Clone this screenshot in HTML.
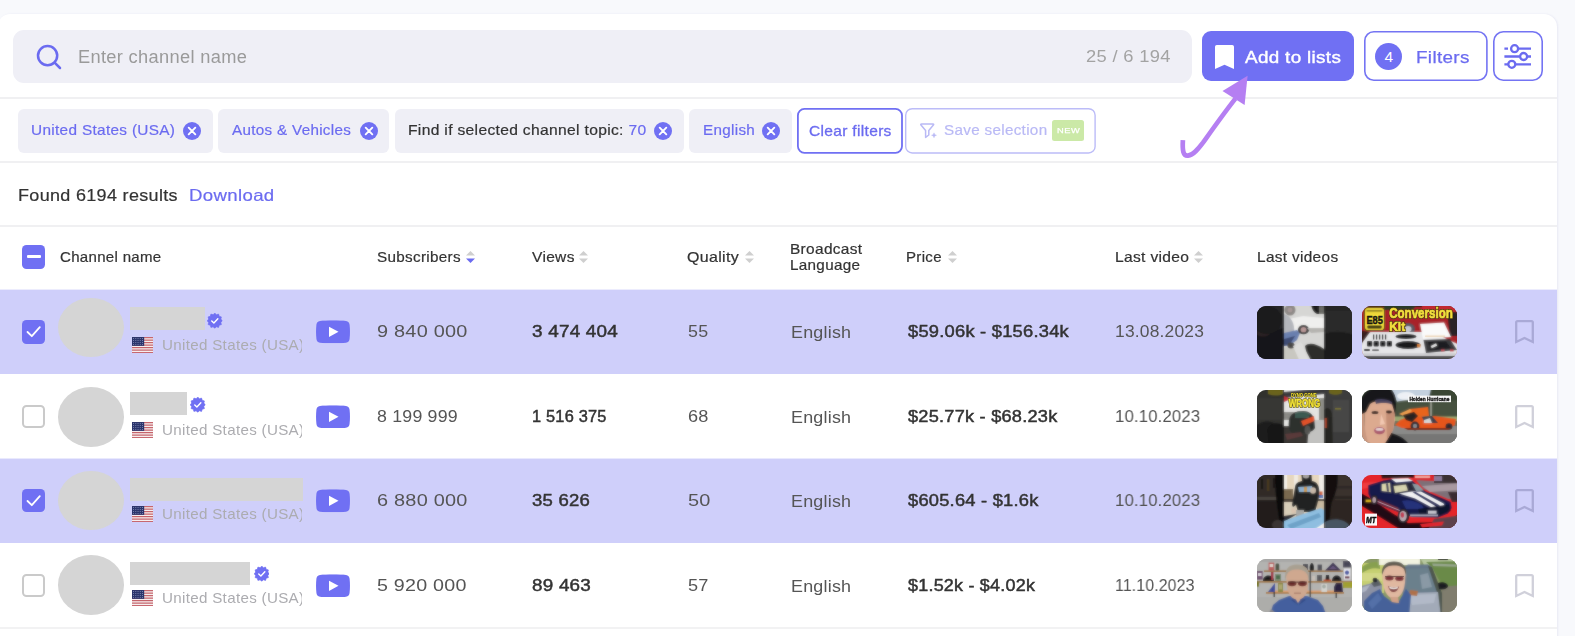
<!DOCTYPE html>
<html><head><meta charset="utf-8">
<style>
*{box-sizing:border-box;margin:0;padding:0}
html,body{width:1575px;height:636px;overflow:hidden;background:#f8f9fc;font-family:"Liberation Sans",sans-serif;color:#333}
.abs{position:absolute}
#card{position:absolute;left:-2px;top:14px;width:1559px;height:640px;background:#fff;border-radius:12px 13px 0 0;box-shadow:1px 0 2px rgba(120,120,190,.12)}
.hl{position:absolute;left:0;width:1557px;height:2px;background:#f0f0f2}
#search{position:absolute;left:13px;top:30px;width:1179px;height:53px;background:#efeff6;border-radius:11px}
.t{position:absolute;white-space:pre;line-height:20px;transform-origin:0 50%;will-change:transform}
.chip{position:absolute;top:109px;height:43.5px;background:#efeff6;border-radius:6px}
.x{position:absolute;top:122px;width:18px;height:18px}
.btn{position:absolute;border-radius:9px}
.row{position:absolute;left:0;width:1557px;height:84.5px}
.row.sel{background:#cfcffa}
.cb{position:absolute;left:21.8px;width:23.6px;height:23.6px;border-radius:4.5px}
.cb.on{background:#7070f3}
.cb.off{background:#fff;border:2.2px solid #cacaca}
.av{position:absolute;left:58px;width:66.2px;height:59.7px;border-radius:50%;background:#d5d5d5}
.nm{position:absolute;left:130px;height:23px;background:#d5d5d5}
.yt{position:absolute;left:315.8px;width:34px;height:23.6px}
.th{position:absolute;width:95px;height:53px;border-radius:9px;overflow:hidden}
.th svg{display:block}
.bm{position:absolute;left:1515px;width:19px;height:24px}
.vf{position:absolute;width:15.5px;height:15.5px}
.fl{position:absolute;left:132.2px;width:21.3px;height:16.3px}
.cty{position:absolute;left:161.8px;width:139.5px;will-change:transform;height:20px;overflow:hidden;white-space:nowrap;color:#acacb0;font-size:14.5px;line-height:20px;letter-spacing:.3px}
.cty span{display:inline-block;transform-origin:0 50%;transform:scaleX(1.045)}
.so{position:absolute;top:251px;width:9px;height:12px}
</style></head><body>
<svg width="0" height="0" style="position:absolute">
<defs>
<symbol id="x" viewBox="0 0 18 18"><circle cx="9" cy="9" r="9" fill="#7070f3"/><path d="M5.7 5.7L12.3 12.3M12.3 5.7L5.7 12.3" stroke="#fff" stroke-width="1.9" stroke-linecap="round"/></symbol>
<symbol id="so" viewBox="0 0 9 12"><path d="M4.5 0L9 4.6H0Z" fill="#cfcfcf"/><path d="M4.5 12L9 7.4H0Z" fill="#cfcfcf"/></symbol>
<symbol id="soa" viewBox="0 0 9 12"><path d="M4.5 0L9 4.6H0Z" fill="#cfcfcf"/><path d="M4.5 12L9 7.4H0Z" fill="#6b6bf0"/></symbol>
<symbol id="yt" viewBox="0 0 34 23"><path d="M4 0.6C10 -0.2 24 -0.2 30 0.6C32.3 1 33.4 2.2 33.6 4.5C34.1 9 34.1 14 33.6 18.5C33.4 20.8 32.3 22 30 22.4C24 23.2 10 23.2 4 22.4C1.7 22 0.6 20.8 0.4 18.5C-0.1 14 -0.1 9 0.4 4.5C0.6 2.2 1.7 1 4 0.6Z" fill="#7070f3"/><path d="M13 6.4L22.5 11.5L13 16.6Z" fill="#fff"/></symbol>
<symbol id="bm" viewBox="0 0 19 24"><path d="M2.6 1.2H16.4Q17.8 1.2 17.8 2.6V22L9.5 18L1.2 22V2.6Q1.2 1.2 2.6 1.2Z" fill="none" stroke="rgba(20,20,70,.2)" stroke-width="2.3" stroke-linejoin="miter"/></symbol>
<symbol id="vf" viewBox="0 0 16 16"><path id="vfp" d="M8.00 0.10L9.68 1.72L11.95 1.16L12.60 3.40L14.84 4.05L14.28 6.32L15.90 8.00L14.28 9.68L14.84 11.95L12.60 12.60L11.95 14.84L9.68 14.28L8.00 15.90L6.32 14.28L4.05 14.84L3.40 12.60L1.16 11.95L1.72 9.68L0.10 8.00L1.72 6.32L1.16 4.05L3.40 3.40L4.05 1.16L6.32 1.72Z" fill="#7070f3" stroke="#7070f3" stroke-width=".7" stroke-linejoin="round"/><path d="M4.9 8.2L7.1 10.3L11.2 5.9" fill="none" stroke="#fff" stroke-width="1.45" stroke-linecap="round" stroke-linejoin="round"/></symbol>
<symbol id="fl" viewBox="0 0 21 16"><rect width="21" height="16" fill="#f6eeee"/><g fill="#c5626a"><rect y="0" width="21" height="1.2"/><rect y="2.46" width="21" height="1.2"/><rect y="4.92" width="21" height="1.2"/><rect y="7.38" width="21" height="1.2"/><rect y="9.84" width="21" height="1.2"/><rect y="12.3" width="21" height="1.2"/><rect y="14.8" width="21" height="1.2"/></g><rect width="12" height="8.7" fill="#2b356c"/><g fill="#8890b8"><rect x="1.1" y="1.0" width=".9" height=".9"/><rect x="3.3" y="1.0" width=".9" height=".9"/><rect x="5.5" y="1.0" width=".9" height=".9"/><rect x="7.7" y="1.0" width=".9" height=".9"/><rect x="9.9" y="1.0" width=".9" height=".9"/><rect x="1.1" y="3.0" width=".9" height=".9"/><rect x="3.3" y="3.0" width=".9" height=".9"/><rect x="5.5" y="3.0" width=".9" height=".9"/><rect x="7.7" y="3.0" width=".9" height=".9"/><rect x="9.9" y="3.0" width=".9" height=".9"/><rect x="1.1" y="5.0" width=".9" height=".9"/><rect x="3.3" y="5.0" width=".9" height=".9"/><rect x="5.5" y="5.0" width=".9" height=".9"/><rect x="7.7" y="5.0" width=".9" height=".9"/><rect x="9.9" y="5.0" width=".9" height=".9"/><rect x="1.1" y="7.0" width=".9" height=".9"/><rect x="3.3" y="7.0" width=".9" height=".9"/><rect x="5.5" y="7.0" width=".9" height=".9"/><rect x="7.7" y="7.0" width=".9" height=".9"/><rect x="9.9" y="7.0" width=".9" height=".9"/></g></symbol>
<filter id="bl" x="-10%" y="-10%" width="120%" height="120%"><feGaussianBlur stdDeviation="0.85"/></filter>
<filter id="bl2" x="-10%" y="-10%" width="120%" height="120%"><feGaussianBlur stdDeviation="1.3"/></filter>
<filter id="bl3" x="-10%" y="-10%" width="120%" height="120%"><feGaussianBlur stdDeviation="0.35"/></filter>

<symbol id="th0a" viewBox="0 0 95 53"><g id="c0a">
<rect x="-5" y="-5" width="105" height="63" fill="#262628"/>
<path d="M-5 30L27 22V58H-5Z" fill="#14161a"/>
<ellipse cx="6" cy="27" rx="7" ry="3.5" fill="#2c2223"/>
<ellipse cx="10" cy="14" rx="15" ry="14" fill="#1c1c1e"/>
<rect x="27" y="-5" width="40" height="63" fill="#d6d6d4"/>
<path d="M27 14L46 10L67 12V22L48 22L38 30L27 26Z" fill="#efefee"/>
<path d="M27 8C34 10 38 18 37 26L27 30Z" fill="#b4b6bc"/>
<ellipse cx="33" cy="4" rx="5.5" ry="5.5" fill="#8c8886"/>
<ellipse cx="33" cy="4" rx="2.5" ry="2.5" fill="#a79a98"/>
<path d="M54 -5H67V8H60C56 6 54 2 54 -5Z" fill="#1e1e1e"/>
<rect x="62" y="0" width="5" height="8" fill="#6b6b66"/>
<path d="M27 27L40 24L43 27L40 34L32 40L27 40Z" fill="#6a7fae"/>
<path d="M27 33L38 30L33 38L27 40Z" fill="#3f4d74"/>
<ellipse cx="46.5" cy="23.7" rx="5.6" ry="4.6" fill="#3c3a3a"/>
<ellipse cx="46.5" cy="23.7" rx="3" ry="2.6" fill="#b89a98"/>
<path d="M50 22H67V26L54 27Z" fill="#b5b3b0"/>
<path d="M48 40C52 36 60 38 67 43V58H52Z" fill="#2e2e2c"/>
<path d="M27 42L36 40L44 58H27Z" fill="#c9c7c0"/>
<ellipse cx="34" cy="39.5" rx="3.6" ry="3" fill="#4a4846"/>
<path d="M36 40L44 36L56 58H44Z" fill="#dededc"/>
<rect x="67" y="-5" width="33" height="63" fill="#2c2c2b"/>
<path d="M67 28C78 24 90 26 100 30V58H67Z" fill="#1d1d1c"/>
<rect x="67" y="-5" width="33" height="10" fill="#262626"/>
</g><use href="#c0a" filter="url(#bl)" opacity=".6"/></symbol>

<symbol id="th0b" viewBox="0 0 95 53"><g id="c0b">
<rect x="-5" y="-5" width="105" height="63" fill="#a8232a"/>
<rect x="-5" y="-5" width="105" height="6" fill="#3a1a18"/>
<path d="M22 -5H60L50 4H22Z" fill="#2c3a2a"/>
<path d="M60 -2L92 -2L95 14L60 10Z" fill="#c12a30"/>
<path d="M85 6H100V30H88Z" fill="#2a2426"/>
<ellipse cx="46" cy="23" rx="7" ry="6" fill="#5a5660"/>
<ellipse cx="46" cy="23" rx="3.5" ry="3" fill="#c8c8d0"/>
<path d="M-5 27L10 26H70L100 40V58H-5Z" fill="#e6e6e8"/>
<path d="M-5 24L8 26L-5 44Z" fill="#3a2020"/>
<path d="M-5 49H100V58H-5Z" fill="#4a4a4c"/>
<path d="M-2 47H95V50H-2Z" fill="#cfcfd2"/>
<g fill="#1c1c1e">
<rect x="5" y="35" width="5.2" height="5.6" rx="1"/><rect x="11.6" y="35" width="5.2" height="5.6" rx="1"/><rect x="18.2" y="35" width="5.2" height="5.6" rx="1"/><rect x="24.8" y="35" width="5.2" height="5.6" rx="1"/>
<rect x="2" y="43" width="6" height="2" rx="1"/><rect x="10" y="43.4" width="7" height="1.4" rx=".7"/>
<rect x="11" y="28.5" width="1.2" height="5"/><rect x="14" y="28.5" width="1.2" height="5"/><rect x="17" y="28.5" width="1.2" height="5"/><rect x="20" y="28.5" width="1.2" height="5"/><rect x="23" y="28.5" width="1.2" height="5"/>
<ellipse cx="44" cy="30.5" rx="10.5" ry="2.6"/><ellipse cx="46" cy="39" rx="12.5" ry="4"/>
</g>
<rect x="55" y="38" width="3.4" height="3.4" fill="#d07a30"/>
<path d="M58 18L82 16.5L89 31L61 33Z" fill="#fbfbfb"/>
<rect x="63" y="29.6" width="20" height="1.2" fill="#e8c9a0"/>
<path d="M61.5 34L88 33L95 44L64 47Z" fill="#3a3a3e"/>
<path d="M66 36L84 35.5L89 42L68 44Z" fill="#1e1e22"/>
<rect x="69" y="38.5" width="6" height="2.6" fill="#e6e6e6" transform="rotate(-25 72 40)"/>
<rect x="79" y="43.4" width="3.6" height="2" fill="#c0404c"/><rect x="88" y="43.4" width="3.6" height="2" fill="#c0404c"/>
<rect x="2.2" y="1.2" width="20.6" height="23.6" rx="3.4" fill="#3a3210"/>
<rect x="3" y="2" width="19" height="22" rx="2.8" fill="#f0d93a"/>
<rect x="5.4" y="19.4" width="14.2" height="3.2" rx=".8" fill="#2a2610"/>
<rect x="4.6" y="4.2" width="15.8" height="1.3" fill="#6a5e18"/>
</g><use href="#c0b" filter="url(#bl)" opacity=".6"/>
<text x="4.4" y="17.6" font-family="Liberation Sans" font-weight="bold" font-size="11.6" fill="#1a1a12" textLength="16.4" lengthAdjust="spacingAndGlyphs" stroke="#1a1a12" stroke-width=".5">E85</text>
<g font-family="Liberation Sans" font-weight="bold" filter="url(#bl3)">
<text x="27.2" y="12.4" font-size="14.8" textLength="63.6" lengthAdjust="spacingAndGlyphs" fill="#4a3a10" stroke="#4a3a10" stroke-width="2">Conversion</text>
<text x="27.2" y="24.7" font-size="13.4" textLength="16" lengthAdjust="spacingAndGlyphs" fill="#4a3a10" stroke="#4a3a10" stroke-width="2">Kit</text>
<text x="27.2" y="12.4" font-size="14.8" textLength="63.6" lengthAdjust="spacingAndGlyphs" fill="#f3de3e" stroke="#f3de3e" stroke-width=".7">Conversion</text>
<text x="27.2" y="24.7" font-size="13.4" textLength="16" lengthAdjust="spacingAndGlyphs" fill="#f3de3e" stroke="#f3de3e" stroke-width=".7">Kit</text>
</g>
</symbol>

<symbol id="th1a" viewBox="0 0 95 53"><g id="c1a">
<rect x="-5" y="-5" width="105" height="63" fill="#30302e"/>
<rect x="-5" y="8" width="32" height="22" fill="#383836"/>
<path d="M-5 40C2 30 14 30 18 34L27 36V58H-5Z" fill="#1e1e1e"/>
<path d="M10 40C12 32 22 32 27 36V58H12Z" fill="#181818"/>
<path d="M11 -3H26V4C22 6 15 6 11 4Z" fill="#6b641e"/>
<rect x="27" y="-5" width="40" height="63" fill="#e4e4e2"/>
<path d="M27 2L67 -2V4L27 8Z" fill="#3a3a3e"/>
<path d="M27 6L34 9L27 12Z" fill="#c03038"/>
<rect x="27" y="22" width="14" height="8" fill="#8a8a86"/>
<rect x="62" y="8" width="5" height="24" fill="#8c8c86"/>
<path d="M52 30H67V58H48Z" fill="#c2c2c0"/>
<path d="M27 36L52 36L50 58H27Z" fill="#3a3836"/>
<path d="M32 30C33 24 38 21 46 21C52 21 55 24 57 28L58 38C56 42 50 43 46 43H36C32 42 31 36 32 30Z" fill="#2d302e"/>
<path d="M38 23C42 21 50 21 53 24L52 28H38Z" fill="#3e5a52"/>
<path d="M44 31L57 26L57.5 31L46 36Z" fill="#e0522a"/>
<ellipse cx="50.5" cy="40" rx="3" ry="4.6" fill="#555553"/>
<path d="M28 44L44 42L46 46L30 50Z" fill="#5a3a3a"/>
<rect x="67" y="-5" width="33" height="63" fill="#3e3e3c"/>
<rect x="76" y="10" width="16" height="32" fill="#484846"/>
<path d="M72 -3H85V3C82 5.4 75 5.4 72 3Z" fill="#6b641e"/>
<path d="M67 20C70 16 74 18 75 24L76 58H67Z" fill="#262624"/>
<rect x="67.5" y="28" width="2.4" height="10" fill="#a04028"/>
<rect x="78" y="18" width="6" height="1.6" fill="#7a7436"/>
</g><use href="#c1a" filter="url(#bl)" opacity=".6"/>
<g font-family="Liberation Sans" font-weight="bold" filter="url(#bl3)">
<text x="31.8" y="17.2" font-size="10" textLength="31.4" lengthAdjust="spacingAndGlyphs" fill="#4a4410" stroke="#4a4410" stroke-width="1.6">WRONG</text>
<text x="31.8" y="17.2" font-size="10" textLength="31.4" lengthAdjust="spacingAndGlyphs" fill="#f2e23a" stroke="#f2e23a" stroke-width=".5">WRONG</text>
<text x="34" y="6.6" font-size="4.8" textLength="25.6" lengthAdjust="spacingAndGlyphs" fill="#f2e23a" stroke="#4a4410" stroke-width=".8" paint-order="stroke">DYNO GONE</text>
</g>
</symbol>

<symbol id="th1b" viewBox="0 0 95 53"><g id="c1b">
<rect x="-5" y="-5" width="105" height="63" fill="#414c3a"/>
<path d="M28 -5H72L68 6L60 14H36Z" fill="#c3d0de"/>
<ellipse cx="44" cy="6" rx="9" ry="4" fill="#eef1f5"/>
<path d="M70 -5H100V12H66Z" fill="#3a4636"/>
<path d="M34 12C44 8 60 12 100 10V30H34Z" fill="#475240"/>
<rect x="30" y="26.5" width="70" height="5" fill="#99a772"/>
<rect x="30" y="31" width="70" height="6" fill="#6d705e"/>
<rect x="-5" y="36" width="105" height="22" fill="#8b8b89"/>
<rect x="30" y="44" width="70" height="14" fill="#777775"/>
<rect x="68.4" y="12" width="1.2" height="14" fill="#bdbdb5"/>
<path d="M33 35L38 30L46 27L66 27L72 26L94 29L93 35L88 38H40Z" fill="#e5561c"/>
<path d="M40 24L48 19L66 17L67 26L58 27L46 27Z" fill="#e8651f"/>
<path d="M37 24L48 19L50 21L42 26Z" fill="#f0a050"/>
<path d="M41 25L52 22L56 26L50 32L44 30Z" fill="#2a2420"/>
<path d="M60 27L70 26L76 33L63 33Z" fill="#3a3e48"/>
<path d="M62 30L68 28L70 33H62Z" fill="#d8d8d8"/>
<ellipse cx="53" cy="36" rx="4.4" ry="4.4" fill="#2c2c30"/><ellipse cx="53" cy="36" rx="2.2" ry="2.2" fill="#8a8a90"/>
<ellipse cx="87" cy="36.5" rx="3.4" ry="3.2" fill="#2c2c30"/>
<path d="M42 38H90L86 40H46Z" fill="#7a2810"/>
<path d="M22 42C30 42 40 46 46 53V58H22Z" fill="#17171a"/>
<path d="M3 12C6 8 26 8 32 14L33 30L31 40L24 52L20 58H6L2 44Z" fill="#dcaa90"/>
<path d="M3 20C2 30 2 40 6 52L3 58H-5V20Z" fill="#c99880"/>
<path d="M24 20L33 22L31 40L25 50Z" fill="#c48e76"/>
<path d="M-2 14C0 2 10 -3 20 -3C30 -3 35 4 34 16L33 24L30 14C24 10 12 10 8 14L4 22L0 24Z" fill="#19191b"/>
<path d="M13 10C18 8 26 9 30 12L30 14.4C26 12.6 18 12.4 14 14Z" fill="#4a4460"/>
<ellipse cx="13" cy="22.5" rx="3.4" ry="1.5" fill="#3a2a24"/><ellipse cx="27" cy="22" rx="3" ry="1.4" fill="#3a2a24"/>
<path d="M19 24L23 34L18 35Z" fill="#f2c8b2"/>
<ellipse cx="17.5" cy="40.6" rx="5.4" ry="3.6" fill="#a8566a"/>
<ellipse cx="17.5" cy="39.4" rx="4" ry="1.4" fill="#e8d8d8"/>
</g><use href="#c1b" filter="url(#bl)" opacity=".6"/>
<rect x="46" y="5.6" width="43" height="6.6" fill="#f6f6f6" filter="url(#bl3)"/>
<text x="47.4" y="10.8" font-family="Liberation Sans" font-weight="bold" font-size="5.4" fill="#151515" stroke="#151515" stroke-width=".35" textLength="40" lengthAdjust="spacingAndGlyphs" filter="url(#bl3)">Holden Hurricane</text>
</symbol>

<symbol id="th2a" viewBox="0 0 95 53"><g id="c2a">
<rect x="-5" y="-5" width="105" height="63" fill="#241f1c"/>
<rect x="-5" y="-5" width="26" height="28" fill="#302b28"/>
<rect x="0" y="22" width="20" height="3" fill="#4a4540"/>
<rect x="4" y="4" width="2" height="10" fill="#1a1816"/><rect x="10" y="4" width="2.4" height="12" fill="#4a3a20"/><rect x="16" y="3" width="2" height="10" fill="#1a1816"/>
<path d="M18 -5H27V58H24L22 44C20 30 18 20 18 -5Z" fill="#0d0b0b"/>
<ellipse cx="21" cy="50" rx="6" ry="5" fill="#3a3634"/>
<rect x="27" y="-5" width="40" height="63" fill="#e6d7be"/>
<rect x="27" y="-5" width="3" height="40" fill="#f3efe8"/>
<rect x="37" y="-5" width="4" height="30" fill="#f1ece2"/>
<rect x="62" y="-5" width="5" height="36" fill="#f0ebe6"/>
<rect x="27" y="14" width="9" height="12" fill="#7a6a50"/>
<rect x="27" y="24" width="40" height="3" fill="#4a4038"/>
<rect x="27" y="27" width="12" height="16" fill="#d8cdb8"/>
<rect x="60" y="26" width="7" height="12" fill="#c9b9a0"/>
<rect x="62.5" y="16.5" width="3" height="4" fill="#d0603a"/><rect x="62" y="20" width="4" height="3" fill="#5070b0"/>
<path d="M44 -5H54L55 6C62 7 63 14 62 22L60 30L58 37H41L39 30L36 32L35 30L38 12C39 7 42 7 45 6Z" fill="#222324"/>
<ellipse cx="49" cy="0" rx="3.4" ry="3.6" fill="#a8a4a0"/>
<path d="M41 12L55 11L56 17L42 17Z" fill="#8fb0cc"/>
<rect x="47" y="12" width="3" height="5" fill="#c89a50"/>
<ellipse cx="56" cy="15.5" rx="3" ry="3.2" fill="#c9b8a8"/>
<ellipse cx="36.4" cy="35.5" rx="2.4" ry="2.6" fill="#d9c4b0"/>
<rect x="39" y="35" width="8" height="8" fill="#a9a9a6"/>
<path d="M27 41L40 39L27 47Z" fill="#2a2a30"/>
<path d="M27 46L46 39L64 33L67 35V58H27Z" fill="#8fbfe0"/>
<path d="M30 50L62 38L64 42L34 54Z" fill="#6fa2c8"/>
<path d="M52 58L67 48V58Z" fill="#f0f0f0"/>
<rect x="67" y="-5" width="33" height="63" fill="#2e2623"/>
<rect x="78" y="-5" width="22" height="30" fill="#3a322f"/>
<rect x="76" y="21" width="24" height="3" fill="#2c2624"/>
<rect x="80" y="11" width="16" height="2.4" fill="#2e2826"/>
<path d="M67 -5H80C82 6 80 16 76 24C73 30 74 40 72 47H67Z" fill="#121010"/>
<path d="M68 47C76 42 88 44 92 50L94 58H68Z" fill="#4a5663"/>
</g><use href="#c2a" filter="url(#bl)" opacity=".6"/></symbol>

<symbol id="th2b" viewBox="0 0 95 53"><g id="c2b">
<rect x="-5" y="-5" width="105" height="63" fill="#e4262c"/>
<path d="M18 -5H52V2.6L20 3.6Z" fill="#2a1a1e"/>
<path d="M50 -5H72V6L54 5Z" fill="#d8222a"/>
<rect x="53" y="0.4" width="15" height="2.6" fill="#f0a8a0"/>
<path d="M54 5L72 6V-5H100V26L86 24L62 14Z" fill="#7e7078"/>
<path d="M72 -5H100V8H72Z" fill="#3a3034"/>
<rect x="72" y="1" width="8" height="5" fill="#8a7a9a"/>
<path d="M60 11L100 8V15L68 17Z" fill="#a89aa0"/>
<path d="M86 17H100V27H90Z" fill="#3a2c30"/>
<path d="M0 8L24 6L10 12L0 14Z" fill="#f03c40"/>
<path d="M-5 16L6 22L30 38L46 48L84 47L95 40V58H44L-5 28Z" fill="#200c14"/>
<path d="M72 44L100 40V58H64Z" fill="#5c434b"/>
<path d="M58 49L82 46.6L80 50.6L60 52.4Z" fill="#e02830"/>
<rect x="3.6" y="24.6" width="6" height="2.6" fill="#d8b020"/>
<path d="M6.3 10.2L21.7 5.6L34 3.4L49.3 5.1L58.5 12.8L63.6 16.4L82 24L88.6 27L89.6 33L86 38.6L76 42.4L50 42L37 37.3L10.4 27L6.4 19Z" fill="#171b4c"/>
<path d="M11 22L36 32.4L37.6 37.4L11 27Z" fill="#6a1a30"/>
<path d="M13 25.4L38 35.6" stroke="#c9c0d0" stroke-width=".9"/>
<path d="M29 3.8L46 3.2L51 6L34 7.4Z" fill="#f2f2f4"/>
<path d="M30 9L50 7.4L60 15.6L40 18L31.6 17.4Z" fill="#2a2a3a"/>
<path d="M31.6 11L44 9.6L46 15.6L33 18Z" fill="#d8d4b0"/>
<path d="M50 8.6L56 9.6L62 15.6L54 16Z" fill="#8a9aa0"/>
<path d="M19.6 9L28 7.8L29 17.2L19.6 16Z" fill="#ddd6ac"/>
<path d="M24 8.4L26 8.2L27 16.8L25 16.6Z" fill="#3a3a50"/>
<path d="M37 18.4L50 16.6L59 16.6L81.6 28.4L82.6 30.6L71.6 33.6L53 23.6Z" fill="#f4f4f6"/>
<path d="M50.6 17.2L53.6 17L78 30.6L75 32Z" fill="#171b4c"/>
<path d="M40 26C46 24 54 26 60 30L62 34L44 34Z" fill="#26327a"/>
<path d="M56 34L87 29.6L88.6 36L78 40.4L58 40.4Z" fill="#11122e"/>
<rect x="66" y="35.6" width="8.6" height="3.2" fill="#c8c8d0"/>
<rect x="48" y="39.4" width="28" height="2" fill="#a8a8b8"/>
<ellipse cx="41.4" cy="41" rx="5.8" ry="7.2" fill="#241a24"/>
<ellipse cx="41" cy="41" rx="3.8" ry="5.2" fill="#b8a8b0"/>
<ellipse cx="40.4" cy="40" rx="1.7" ry="2.8" fill="#c03048"/>
<ellipse cx="12.4" cy="25" rx="3.3" ry="4.8" fill="#241a24"/>
<ellipse cx="12.2" cy="25" rx="1.9" ry="3" fill="#b09aa4"/>
</g><use href="#c2b" filter="url(#bl)" opacity=".6"/>
<rect x="3" y="38.6" width="12" height="12" fill="#fafafa" filter="url(#bl3)"/>
<text x="4" y="48.4" font-family="Liberation Sans" font-weight="bold" font-style="italic" font-size="9.4" fill="#0c0c0c" stroke="#0c0c0c" stroke-width=".5" textLength="10" lengthAdjust="spacingAndGlyphs" filter="url(#bl3)">MT</text>
</symbol>

<symbol id="th3a" viewBox="0 0 95 53"><g id="c3a">
<rect x="-5" y="-5" width="105" height="63" fill="#b3b3b1"/>
<rect x="-5" y="-5" width="105" height="8" fill="#a9a9a7"/>
<rect x="-5" y="38" width="105" height="20" fill="#adadab"/>
<rect x="7" y="11.4" width="79" height="1.6" fill="#9b7446"/>
<rect x="-5" y="22" width="105" height="1.7" fill="#a0784a"/>
<rect x="9" y="33" width="78" height="1.8" fill="#a87c4c"/>
<rect x="12" y="31.6" width="70" height="1.6" fill="#e0a070"/>
<rect x="-5" y="22.6" width="7" height="5" fill="#7a7a28"/><rect x="86" y="23" width="14" height="6" fill="#a0a030"/>
<rect x="16.6" y="30" width="1.2" height="8" fill="#2a2a2a"/><rect x="78.6" y="34" width="1.2" height="5" fill="#2a2a2a"/><rect x="52.6" y="12" width="1.2" height="26" fill="#3a3a3a"/>
<rect x="0" y="12" width="5.6" height="8.6" fill="#6a4a6a"/><rect x="1" y="14" width="3.6" height="3" fill="#d8d0d8"/>
<rect x="11.6" y="3.6" width="5.6" height="8" fill="#b85a5a"/><rect x="12.6" y="5" width="3.6" height="3" fill="#e0d8d0"/>
<rect x="18.6" y="4.6" width="3.6" height="7" rx="1.4" fill="#4a5040"/>
<path d="M6 22C6 18 9 16.6 11.4 16.6C14 16.6 17 18 17 22Z" fill="#1c1c1e"/>
<rect x="18" y="15" width="6" height="7" fill="#7a8a72"/><rect x="19" y="16.4" width="4" height="3.6" fill="#4a6a4a"/>
<rect x="14" y="13" width="2.4" height="8" fill="#a03040"/>
<path d="M11 33L18 24L18 33Z" fill="#3a4a9a"/>
<rect x="21" y="24" width="5" height="9" fill="#8a8a4a"/><rect x="22" y="25.4" width="3" height="5" fill="#b0a870"/>
<rect x="46" y="5" width="5" height="6.4" fill="#4a4a50"/>
<path d="M53 11.4C52 8 53.4 4 54.8 4C56.4 4 57.6 8 56.6 11.4Z" fill="#1a1a1c"/>
<rect x="60.6" y="5.6" width="4.4" height="5.8" fill="#505058"/>
<path d="M68 11.4L76 3.6L84 11.4Z" fill="#3a3050"/><path d="M72 10L76 6.4L80 10Z" fill="#6a5a80"/>
<rect x="86" y="2" width="8" height="6.4" fill="#4a4858"/>
<rect x="87" y="9.6" width="6.4" height="11" fill="#e8e8ee"/><ellipse cx="90" cy="13.6" rx="2" ry="2.2" fill="#3a4a9a"/><rect x="88" y="17.4" width="4.4" height="2" fill="#5a2a3a"/>
<rect x="60" y="16" width="5" height="6" fill="#5a5a5e"/>
<rect x="55" y="17" width="3" height="5" fill="#c8c0b8"/>
<path d="M68.4 22L69 16H72L72.6 22Z" fill="#1c1a1e"/><rect x="66.6" y="20.6" width="7.6" height="1.6" fill="#c05030"/>
<path d="M75 22C75 18.4 77.6 16.6 79.6 16.6C82 16.6 84.4 18.4 84.4 22Z" fill="#1a1a1e"/>
<rect x="64.4" y="25" width="5.6" height="8" fill="#d4d4d0"/><ellipse cx="67" cy="27.6" rx="1.8" ry="2" fill="#a0a8a0"/>
<path d="M77 33V28L79 24H85L86 33Z" fill="#2c2440"/>
<path d="M12 58L16 46L22 41L32 37H50L61 41L66 47L70 58Z" fill="#45609e"/>
<path d="M36 37L41 44L46 37Z" fill="#d0a890"/>
<path d="M38 38L41 46L34 41Z" fill="#38508c"/><path d="M44 38L42 46L49 41Z" fill="#38508c"/>
<path d="M10 58L14 50L24 58Z" fill="#8a8a90"/>
<path d="M29 16C29 8 35 6 40 6C46 6 52 8 51.6 17L51 28C50 36 46 40.6 41 40.6C35 40.6 31.4 36 30 28Z" fill="#cfa890"/>
<path d="M28 22C27 10 32 5.6 40 5.6C48 5.6 53 10 52 22L50.6 16C48 11 44 10.4 40 10.4C36 10.4 32 11 29.6 16Z" fill="#a9a091"/>
<ellipse cx="35" cy="24.6" rx="4.4" ry="2.7" fill="#6a2c2a"/><ellipse cx="45.4" cy="24.6" rx="4.4" ry="2.7" fill="#6a2c2a"/>
<rect x="31" y="22.6" width="19" height="1" fill="#4a2a28"/>
<rect x="37" y="33.6" width="7" height="1.2" fill="#a87a6a"/>
</g><use href="#c3a" filter="url(#bl)" opacity=".6"/></symbol>

<symbol id="th3b" viewBox="0 0 95 53"><g id="c3b">
<rect x="-5" y="-5" width="105" height="63" fill="#8a9a68"/>
<path d="M-5 4H22V34L-5 34Z" fill="#c6cf72"/>
<path d="M0 8C6 3 14 2 18 4V10C12 8 6 10 0 14Z" fill="#88a050"/>
<path d="M-5 14H20V22H-5Z" fill="#d2d888"/>
<path d="M17 -5H58V6H17Z" fill="#f2f2e2"/>
<path d="M56 -5H100V4L62 6Z" fill="#b8c8a0"/>
<path d="M76 -2H86V1H76Z" fill="#2a2a28"/>
<path d="M64 3L100 2V30L82 30L70 8Z" fill="#6b8a4a"/>
<path d="M70 4.6L100 5.6V8L71 7Z" fill="#9aa890"/>
<path d="M80 28L100 26V58H76Z" fill="#807e6e"/>
<path d="M-5 28L10 24L20 26V44L-5 48Z" fill="#8c92a4"/>
<path d="M-5 30L8 26L4 32L-5 36Z" fill="#b0b6c4"/>
<path d="M9 24L16 20L20 26L12 28Z" fill="#5a6068"/>
<ellipse cx="13" cy="21" rx="2.4" ry="2.2" fill="#22242a"/>
<path d="M42 8L46 5.6H66L70 8L74 20L78 33L80 58H44L40 30Z" fill="#66788a"/>
<path d="M43 10L67 9L74 32L44 33Z" fill="#6c808c"/>
<path d="M58 16L66 14L70 28L60 30Z" fill="#8a9aa6"/>
<path d="M66 7L70 8L80 34L80 58H74L76 36Z" fill="#4e564e"/>
<path d="M44 34L76 33L79 58H44Z" fill="#a2aab8"/>
<path d="M46 36L74 35L72 44L50 46Z" fill="#b2bac8"/>
<path d="M48 31L56 32L55 37L47 36Z" fill="#b07048"/>
<path d="M76 24C80 22 86 24 86 27C86 30 80 31 77 30Z" fill="#1c1e22"/>
<path d="M1 58L2 42L10 34L18 30L22 37L30 43L36 44L44 30L49 36L47 58Z" fill="#46629a"/>
<path d="M6 44L16 34L20 40L10 50Z" fill="#5470a8"/>
<path d="M20 14C20 6 26 3.6 32 3.6C39 3.6 44 7 43.6 15L43 24C42 34 37 39.6 32 39.6C27 39.6 22 34 21 24Z" fill="#e0b8a0"/>
<path d="M28 38L36 38L37 44L30 43Z" fill="#d0a088"/>
<path d="M20 16C19 7 24 2.6 32 2.6C40 2.6 45 7 44 16L42 10C39 6.6 35 6.4 32 6.4C28 6.4 24 7 22 11Z" fill="#5c584e"/>
<ellipse cx="27.4" cy="19" rx="4.2" ry="2.5" fill="#7a3038"/><ellipse cx="37.4" cy="19.6" rx="4.2" ry="2.5" fill="#7a3038"/>
<rect x="23" y="17" width="19" height="1" fill="#4a2a2a"/>
<path d="M26 27C29 28.6 34 28.6 37 27.4C36 32 33 33 31.4 33C29 33 27 31 26 27Z" fill="#7a3a3a"/>
<path d="M27 27.6C30 28.8 33.6 28.8 36 27.8L35.6 29.6C33 30.4 30 30.4 27.6 29.4Z" fill="#f0ece8"/>
</g><use href="#c3b" filter="url(#bl)" opacity=".6"/></symbol>

</defs></svg>

<div id="card"></div>
<div class="hl" style="top:97px"></div>
<div class="hl" style="top:161px"></div>
<div class="hl" style="top:225px"></div>

<div id="search"></div>
<svg class="abs" style="left:36px;top:44px" width="26" height="26" viewBox="0 0 26 26"><circle cx="11.6" cy="11.6" r="9.6" fill="none" stroke="#6b6bf0" stroke-width="2.5"/><path d="M18.6 18.6L24 24" stroke="#6b6bf0" stroke-width="2.5" stroke-linecap="round"/></svg>

<div class="btn" style="left:1202px;top:31px;width:152px;height:50px;background:#7070f3"></div>
<svg class="abs" style="left:1215px;top:45px" width="19" height="24" viewBox="0 0 19 24"><path d="M1.8 0H17.2Q19 0 19 1.8V24L9.5 19.8L0 24V1.8Q0 0 1.8 0Z" fill="#fff"/></svg>
<svg class="abs" style="left:1362.6px;top:30.3px" width="125.7" height="52.0"><rect x="1.80" y="1.80" width="122.10" height="48.40" rx="9.0" fill="#fff" stroke="#7474f3" stroke-width="1.60"/></svg>
<div class="abs" style="left:1375.2px;top:43.2px;width:27px;height:27px;border-radius:50%;background:#7070f3;color:#fff;font-size:15.5px;line-height:27.6px;text-align:center">4</div>
<svg class="abs" style="left:1492.1px;top:30.3px" width="52.0" height="52.0"><rect x="1.80" y="1.80" width="48.40" height="48.40" rx="9.5" fill="#fff" stroke="#7474f3" stroke-width="1.60"/></svg>
<svg class="abs" style="left:1504px;top:43px" width="28" height="26" viewBox="0 0 28 26" fill="none" stroke="#6b6bf0" stroke-width="2.3"><path d="M0.4 5.7H4M14.6 5.7H27M0.4 13.5H15.6M23.6 13.5H27M0.4 21.3H4M11.8 21.3H27"/><circle cx="10.6" cy="5.7" r="3.5"/><circle cx="19.6" cy="13.5" r="3.5"/><circle cx="7.8" cy="21.3" r="3.5"/></svg>

<svg class="abs" style="left:1170px;top:65px" width="100" height="105" viewBox="0 0 100 105"><path d="M12.9 75.2C12.3 85 13 91.2 18 90.7C23.5 90 28 84.2 33 77.6C41.3 66 54 48 65.4 33.6" fill="none" stroke="#b57ff2" stroke-width="4.7"/><path d="M77.6 10.7L52.5 26.1L74.6 40.1Z" fill="#b57ff2"/></svg>

<div class="chip" style="left:18px;width:194.5px"></div>
<svg class="x" style="left:182.8px"><use href="#x"/></svg>
<div class="chip" style="left:218px;width:171.4px"></div>
<svg class="x" style="left:359.5px"><use href="#x"/></svg>
<div class="chip" style="left:394.8px;width:289px"></div>
<svg class="x" style="left:653.7px"><use href="#x"/></svg>
<div class="chip" style="left:689px;width:103.4px"></div>
<svg class="x" style="left:762px"><use href="#x"/></svg>

<svg class="abs" style="left:795.8px;top:107.0px" width="107.9" height="47.7"><rect x="1.90" y="1.90" width="104.10" height="43.90" rx="6.5" fill="#fff" stroke="#7070f3" stroke-width="1.80"/></svg>
<svg class="abs" style="left:904.3px;top:107.0px" width="192.8" height="47.7"><rect x="1.70" y="1.70" width="189.40" height="44.30" rx="6.5" fill="#fff" stroke="#bcbcf8" stroke-width="1.40"/></svg>
<svg class="abs" style="left:920px;top:122.5px" width="17" height="16" viewBox="0 0 17 16" fill="none" stroke="#b9b9f5" stroke-width="1.5" stroke-linejoin="round"><path d="M1.6 1H13Q14.2 1 13.4 2L8.8 7.4V12L5.6 14.4V7.4L1 2Q.4 1 1.6 1Z"/><path d="M14 9.8L14.7 11.6L16.5 12.3L14.7 13L14 14.8L13.3 13L11.5 12.3L13.3 11.6Z" fill="#b9b9f5" stroke-width=".4"/></svg>
<div class="abs" style="left:1052.4px;top:120px;width:31.8px;height:20.8px;background:#cbe9a7;border-radius:2.5px"></div>
<div class="t" style="left:1057.2px;top:120.6px;font-size:8px;color:#fff;letter-spacing:.5px;transform:scaleX(1.16);-webkit-text-stroke:.25px #fff">NEW</div>

<div class="cb on" style="top:245px"></div>
<div class="abs" style="left:27px;top:255.2px;width:13.5px;height:3px;background:#fff;border-radius:1px"></div>
<svg class="so" style="left:466px"><use href="#soa"/></svg>
<svg class="so" style="left:579.3px"><use href="#so"/></svg>
<svg class="so" style="left:745px"><use href="#so"/></svg>
<svg class="so" style="left:947.5px"><use href="#so"/></svg>
<svg class="so" style="left:1194px"><use href="#so"/></svg>

<div class="abs" style="left:0;top:289px;width:1557px;height:1px;background:#cfcffa;opacity:.4"></div>
<div class="abs" style="left:0;top:458px;width:1557px;height:1px;background:#cfcffa;opacity:.45"></div>
<div class="abs" style="left:0;top:627px;width:1557px;height:2px;background:#f2f2f3"></div>
<div class="row sel" style="top:289.6px"></div>
<div class="cb on" style="top:320.0px"></div><svg class="abs" style="left:22px;top:320.0px" width="23" height="23" viewBox="0 0 23 23"><path d="M5.5 12L9.8 16.2L17.8 7.2" fill="none" stroke="#fff" stroke-width="1.8" stroke-linecap="round" stroke-linejoin="round"/></svg>
<div class="av" style="top:297.8px"></div>
<div class="nm" style="top:307.2px;width:75.0px"></div>
<svg class="vf" style="left:207.2px;top:313.0px" viewBox="0 0 16 16"><use href="#vf"/></svg>
<svg class="fl" style="top:337.1px" viewBox="0 0 21 16"><use href="#fl"/></svg>
<div class="cty" style="top:335.3px"><span>United States (USA)</span></div>
<svg class="yt" style="top:320.2px" viewBox="0 0 34 23"><use href="#yt"/></svg>
<div class="th" style="left:1257px;top:305.6px"><svg width="95" height="53" viewBox="0 0 95 53"><use href="#th0a"/></svg></div>
<div class="th" style="left:1362px;top:305.6px"><svg width="95" height="53" viewBox="0 0 95 53"><use href="#th0b"/></svg></div>
<svg class="bm" style="top:320.1px" viewBox="0 0 19 24"><use href="#bm"/></svg>
<div class="row" style="top:374.1px"></div>
<div class="cb off" style="top:404.6px"></div>
<div class="av" style="top:387.0px"></div>
<div class="nm" style="top:391.8px;width:57.0px"></div>
<svg class="vf" style="left:190.2px;top:397.4px" viewBox="0 0 16 16"><use href="#vf"/></svg>
<svg class="fl" style="top:421.7px" viewBox="0 0 21 16"><use href="#fl"/></svg>
<div class="cty" style="top:419.9px"><span>United States (USA)</span></div>
<svg class="yt" style="top:404.7px" viewBox="0 0 34 23"><use href="#yt"/></svg>
<div class="th" style="left:1257px;top:390.1px"><svg width="95" height="53" viewBox="0 0 95 53"><use href="#th1a"/></svg></div>
<div class="th" style="left:1362px;top:390.1px"><svg width="95" height="53" viewBox="0 0 95 53"><use href="#th1b"/></svg></div>
<svg class="bm" style="top:404.6px" viewBox="0 0 19 24"><use href="#bm"/></svg>
<div class="row sel" style="top:458.5px"></div>
<div class="cb on" style="top:488.9px"></div><svg class="abs" style="left:22px;top:488.9px" width="23" height="23" viewBox="0 0 23 23"><path d="M5.5 12L9.8 16.2L17.8 7.2" fill="none" stroke="#fff" stroke-width="1.8" stroke-linecap="round" stroke-linejoin="round"/></svg>
<div class="av" style="top:470.6px"></div>
<div class="nm" style="top:477.7px;width:173.3px"></div>
<svg class="fl" style="top:505.8px" viewBox="0 0 21 16"><use href="#fl"/></svg>
<div class="cty" style="top:504.0px"><span>United States (USA)</span></div>
<svg class="yt" style="top:489.1px" viewBox="0 0 34 23"><use href="#yt"/></svg>
<div class="th" style="left:1257px;top:474.5px"><svg width="95" height="53" viewBox="0 0 95 53"><use href="#th2a"/></svg></div>
<div class="th" style="left:1362px;top:474.5px"><svg width="95" height="53" viewBox="0 0 95 53"><use href="#th2b"/></svg></div>
<svg class="bm" style="top:489.0px" viewBox="0 0 19 24"><use href="#bm"/></svg>
<div class="row" style="top:543.0px"></div>
<div class="cb off" style="top:573.5px"></div>
<div class="av" style="top:555.0px"></div>
<div class="nm" style="top:562.0px;width:120.0px"></div>
<svg class="vf" style="left:253.8px;top:566.3px" viewBox="0 0 16 16"><use href="#vf"/></svg>
<svg class="fl" style="top:590.0px" viewBox="0 0 21 16"><use href="#fl"/></svg>
<div class="cty" style="top:588.2px"><span>United States (USA)</span></div>
<svg class="yt" style="top:573.6px" viewBox="0 0 34 23"><use href="#yt"/></svg>
<div class="th" style="left:1257px;top:559.0px"><svg width="95" height="53" viewBox="0 0 95 53"><use href="#th3a"/></svg></div>
<div class="th" style="left:1362px;top:559.0px"><svg width="95" height="53" viewBox="0 0 95 53"><use href="#th3b"/></svg></div>
<svg class="bm" style="top:573.5px" viewBox="0 0 19 24"><use href="#bm"/></svg>
<div class="t" style="left:78.2px;top:47.0px;font-size:17.5px;color:#9a9a9a;letter-spacing:0.3px;transform:scaleX(1.044);">Enter channel name</div>
<div class="t" style="left:1085.7px;top:47.0px;font-size:17px;color:#a3a3a3;letter-spacing:0.3px;transform:scaleX(1.078);">25 / 6 194</div>
<div class="t" style="left:1245.2px;top:47.3px;font-size:16.5px;color:#fff;letter-spacing:0.3px;transform:scaleX(1.141);-webkit-text-stroke:.4px #fff;">Add to lists</div>
<div class="t" style="left:1415.7px;top:47.3px;font-size:16.5px;color:#6b6bf0;letter-spacing:0.3px;transform:scaleX(1.143);-webkit-text-stroke:.25px #6b6bf0;">Filters</div>
<div class="t" style="left:30.7px;top:120.0px;font-size:14.5px;color:#6b6bf0;letter-spacing:0.3px;transform:scaleX(1.059);-webkit-text-stroke:.2px #6b6bf0;">United States (USA)</div>
<div class="t" style="left:231.7px;top:120.0px;font-size:14.5px;color:#6b6bf0;letter-spacing:0.3px;transform:scaleX(1.049);-webkit-text-stroke:.2px #6b6bf0;">Autos &amp; Vehicles</div>
<div class="t" style="left:407.7px;top:120.0px;font-size:14.5px;color:#333;letter-spacing:0.3px;transform:scaleX(1.077);-webkit-text-stroke:.2px;">Find if selected channel topic: <span style="color:#6b6bf0">70</span></div>
<div class="t" style="left:702.7px;top:120.0px;font-size:14.5px;color:#6b6bf0;letter-spacing:0.3px;transform:scaleX(1.049);-webkit-text-stroke:.2px #6b6bf0;">English</div>
<div class="t" style="left:808.7px;top:121.0px;font-size:14.5px;color:#6b6bf0;letter-spacing:0.3px;transform:scaleX(1.071);-webkit-text-stroke:.3px #6b6bf0;">Clear filters</div>
<div class="t" style="left:943.7px;top:120.0px;font-size:14.5px;color:#b9b9f5;letter-spacing:0.3px;transform:scaleX(1.050);-webkit-text-stroke:.2px #b9b9f5;">Save selection</div>
<div class="t" style="left:18.3px;top:185.0px;font-size:16.5px;color:#333;letter-spacing:0.3px;transform:scaleX(1.090);-webkit-text-stroke:.2px;">Found 6194 results</div>
<div class="t" style="left:189.3px;top:185.0px;font-size:16.5px;color:#6b6bf0;letter-spacing:0.3px;transform:scaleX(1.129);-webkit-text-stroke:.2px #6b6bf0;">Download</div>
<div class="t" style="left:60.1px;top:246.5px;font-size:14.5px;color:#333;letter-spacing:0.3px;transform:scaleX(1.037);-webkit-text-stroke:.2px;">Channel name</div>
<div class="t" style="left:376.5px;top:246.5px;font-size:14.5px;color:#333;letter-spacing:0.3px;transform:scaleX(1.051);-webkit-text-stroke:.2px;">Subscribers</div>
<div class="t" style="left:531.7px;top:246.5px;font-size:14.5px;color:#333;letter-spacing:0.3px;transform:scaleX(1.070);-webkit-text-stroke:.2px;">Views</div>
<div class="t" style="left:687.4px;top:246.5px;font-size:14.5px;color:#333;letter-spacing:0.3px;transform:scaleX(1.102);-webkit-text-stroke:.2px;">Quality</div>
<div class="t" style="left:906.2px;top:246.5px;font-size:14.5px;color:#333;letter-spacing:0.3px;transform:scaleX(1.037);-webkit-text-stroke:.2px;">Price</div>
<div class="t" style="left:1114.5px;top:246.5px;font-size:14.5px;color:#333;letter-spacing:0.3px;transform:scaleX(1.075);-webkit-text-stroke:.2px;">Last video</div>
<div class="t" style="left:1256.7px;top:246.5px;font-size:14.5px;color:#333;letter-spacing:0.3px;transform:scaleX(1.062);-webkit-text-stroke:.2px;">Last videos</div>
<div class="t" style="left:790.4px;top:238.5px;font-size:14.5px;color:#333;letter-spacing:0.3px;transform:scaleX(1.065);-webkit-text-stroke:.2px;">Broadcast</div>
<div class="t" style="left:790.4px;top:254.5px;font-size:14.5px;color:#333;letter-spacing:0.3px;transform:scaleX(1.051);-webkit-text-stroke:.2px;">Language</div>
<div class="t" style="left:376.7px;top:322.1px;font-size:17px;color:#555;letter-spacing:0.2px;transform:scaleX(1.170);">9 840 000</div>
<div class="t" style="left:532.3px;top:322.2px;font-size:15.8px;color:#333;letter-spacing:0.2px;transform:scaleX(1.194);-webkit-text-stroke:.45px #333;">3 474 404</div>
<div class="t" style="left:687.7px;top:322.1px;font-size:17px;color:#555;letter-spacing:0.2px;transform:scaleX(1.052);">55</div>
<div class="t" style="left:790.7px;top:322.3px;font-size:16.5px;color:#555;letter-spacing:0.2px;transform:scaleX(1.086);">English</div>
<div class="t" style="left:907.7px;top:322.2px;font-size:15.8px;color:#333;letter-spacing:0.2px;transform:scaleX(1.159);-webkit-text-stroke:.45px #333;">$59.06k - $156.34k</div>
<div class="t" style="left:1114.7px;top:322.1px;font-size:17px;color:#555;letter-spacing:0.2px;transform:scaleX(1.023);">13.08.2023</div>
<div class="t" style="left:376.7px;top:406.6px;font-size:17px;color:#555;letter-spacing:0.2px;transform:scaleX(1.044);">8 199 999</div>
<div class="t" style="left:532.3px;top:406.6px;font-size:15.8px;color:#333;letter-spacing:0.2px;transform:scaleX(1.036);-webkit-text-stroke:.45px #333;">1 516 375</div>
<div class="t" style="left:687.7px;top:406.6px;font-size:17px;color:#555;letter-spacing:0.2px;transform:scaleX(1.067);">68</div>
<div class="t" style="left:790.7px;top:406.8px;font-size:16.5px;color:#555;letter-spacing:0.2px;transform:scaleX(1.086);">English</div>
<div class="t" style="left:907.7px;top:406.6px;font-size:15.8px;color:#333;letter-spacing:0.2px;transform:scaleX(1.151);-webkit-text-stroke:.45px #333;">$25.77k - $68.23k</div>
<div class="t" style="left:1114.7px;top:406.6px;font-size:17px;color:#555;letter-spacing:0.2px;transform:scaleX(0.979);">10.10.2023</div>
<div class="t" style="left:376.7px;top:491.0px;font-size:17px;color:#555;letter-spacing:0.2px;transform:scaleX(1.170);">6 880 000</div>
<div class="t" style="left:532.3px;top:491.1px;font-size:15.8px;color:#333;letter-spacing:0.2px;transform:scaleX(1.172);-webkit-text-stroke:.45px #333;">35 626</div>
<div class="t" style="left:687.7px;top:491.0px;font-size:17px;color:#555;letter-spacing:0.2px;transform:scaleX(1.172);">50</div>
<div class="t" style="left:790.7px;top:491.2px;font-size:16.5px;color:#555;letter-spacing:0.2px;transform:scaleX(1.086);">English</div>
<div class="t" style="left:907.7px;top:491.1px;font-size:15.8px;color:#333;letter-spacing:0.2px;transform:scaleX(1.158);-webkit-text-stroke:.45px #333;">$605.64 - $1.6k</div>
<div class="t" style="left:1114.7px;top:491.0px;font-size:17px;color:#555;letter-spacing:0.2px;transform:scaleX(0.979);">10.10.2023</div>
<div class="t" style="left:376.7px;top:575.5px;font-size:17px;color:#555;letter-spacing:0.2px;transform:scaleX(1.157);">5 920 000</div>
<div class="t" style="left:532.3px;top:575.6px;font-size:15.8px;color:#333;letter-spacing:0.2px;transform:scaleX(1.192);-webkit-text-stroke:.45px #333;">89 463</div>
<div class="t" style="left:687.7px;top:575.5px;font-size:17px;color:#555;letter-spacing:0.2px;transform:scaleX(1.067);">57</div>
<div class="t" style="left:790.7px;top:575.7px;font-size:16.5px;color:#555;letter-spacing:0.2px;transform:scaleX(1.086);">English</div>
<div class="t" style="left:907.7px;top:575.6px;font-size:15.8px;color:#333;letter-spacing:0.2px;transform:scaleX(1.136);-webkit-text-stroke:.45px #333;">$1.52k - $4.02k</div>
<div class="t" style="left:1114.7px;top:575.5px;font-size:17px;color:#555;letter-spacing:0.2px;transform:scaleX(0.927);">11.10.2023</div>
</body></html>
